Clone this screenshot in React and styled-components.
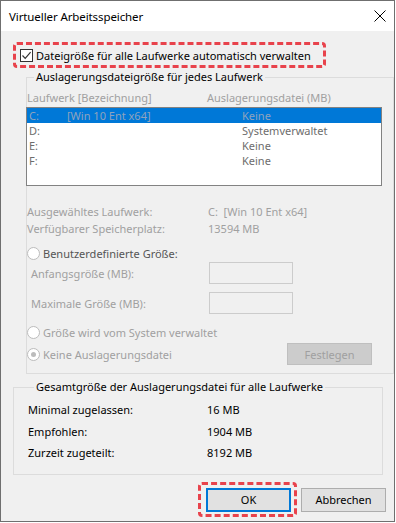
import React from 'react';
import styled, { createGlobalStyle } from 'styled-components';

const GlobalStyle = createGlobalStyle`
  html, body {
    margin: 0;
    padding: 0;
    background: #ffffff;
  }
  * {
    box-sizing: border-box;
  }
`;

const FONT = `"Noto Sans", "Open Sans", Arial, sans-serif`;

const Window = styled.div`
  width: 395px;
  height: 522px;
  border: 1px solid #6f6f6f;
  display: flex;
  flex-direction: column;
  font-family: ${FONT};
  font-size: 11px;
  color: #000;
  background: #f0f0f0;
`;

const TitleBar = styled.div`
  height: 30px;
  background: #fff;
  display: flex;
  align-items: center;
  justify-content: space-between;
  padding: 0 7px 0 8px;
  font-size: 11.5px;
  letter-spacing: -0.1px;
`;

const CloseIcon = styled.svg`
  width: 12px;
  height: 12px;
  margin-right: 1px;
`;

const Body = styled.div`
  flex: 1;
  display: flex;
  flex-direction: column;
  padding: 11px 0 0 12px;
`;

const Highlight = styled.div`
  border: 3px dashed #e8434c;
  border-radius: 4px;
  display: flex;
  align-items: center;
  gap: 3px;
`;

const AutoRow = styled(Highlight)`
  width: 313px;
  height: 26px;
  padding-left: 4px;
`;

const Checkbox = styled.span`
  width: 13px;
  height: 13px;
  border: 1px solid #333;
  background: #fff;
  display: flex;
  align-items: center;
  justify-content: center;
`;

const Group = styled.fieldset`
  margin: ${p => p.$margin};
  padding: ${p => p.$padding};
  border: 1px solid #dcdcdc;
  min-width: 0;
`;

const Legend = styled.legend`
  padding: 0 2px;
  margin-left: ${p => p.$indent}px;
  line-height: 14px;
  color: #000;
`;

const Columns = styled.div`
  display: grid;
  grid-template-columns: ${p => p.$first}px 1fr;
  grid-auto-rows: ${p => p.$line}px;
  align-items: center;
  color: ${p => p.$color || '#000'};
  margin: ${p => p.$margin || '0'};
`;

const ListBox = styled.div`
  margin: 2px 11px 0 -1px;
  height: 79px;
  border: 1px solid #828282;
  background: #fff;
`;

const ListRow = styled.div`
  display: grid;
  grid-template-columns: 38px 175px 1fr;
  height: 15px;
  line-height: 15px;
  padding-left: 2px;
  background: ${p => (p.$selected ? '#0078d7' : 'transparent')};
  color: ${p => (p.$selected ? '#8fa3bd' : '#6d6d6d')};
`;

const RadioRow = styled.div`
  display: flex;
  align-items: center;
  gap: 3px;
  height: ${p => p.$height || 17}px;
  margin-top: ${p => p.$top || 0}px;
  color: ${p => (p.$strong ? '#555' : '#a0a0a0')};
`;

const Radio = styled.span`
  width: 13px;
  height: 13px;
  border-radius: 50%;
  border: 1px solid #bcbcbc;
  background: #fff;
  display: flex;
  align-items: center;
  justify-content: center;

  &::after {
    content: '';
    width: 5px;
    height: 5px;
    border-radius: 50%;
    background: ${p => (p.$checked ? '#bcbcbc' : 'transparent')};
  }
`;

const SizeRow = styled.div`
  display: grid;
  grid-template-columns: 178px 84px;
  align-items: center;
  padding-left: 4px;
  margin-top: ${p => p.$top}px;
  color: #a0a0a0;
`;

const SizeInput = styled.div`
  height: 22px;
  border: 1px solid #cccccc;
  background: #f0f0f0;
`;

const Spacer = styled.div`
  flex: 1;
`;

const Button = styled.button`
  width: 85px;
  height: ${p => p.$height || 24}px;
  font-family: ${FONT};
  font-size: 11px;
  padding: 0;
  border: ${p => (p.$default ? '2px solid #0078d7' : '1px solid #adadad')};
  background: ${p => (p.$disabled ? '#cccccc' : '#e1e1e1')};
  color: ${p => (p.$disabled ? '#a0a0a0' : '#000')};
  border-color: ${p => (p.$disabled ? '#bfbfbf' : undefined)};
`;

const SetButton = styled(Button)`
  margin-right: 21px;
`;

const ButtonBar = styled.div`
  display: flex;
  align-items: center;
  justify-content: flex-end;
  gap: 11px;
  margin: 13px 8px 0 0;
`;

const OkHighlight = styled(Highlight)`
  padding: 3px 3px 2px 5px;
  margin: -6px -7px -5px 0;
`;

const drives = [
  { letter: 'C:', label: '[Win 10 Ent x64]', size: 'Keine', selected: true },
  { letter: 'D:', label: '', size: 'Systemverwaltet' },
  { letter: 'E:', label: '', size: 'Keine' },
  { letter: 'F:', label: '', size: 'Keine' },
];

const totals = [
  ['Minimal zugelassen:', '16 MB'],
  ['Empfohlen:', '1904 MB'],
  ['Zurzeit zugeteilt:', '8192 MB'],
];

export default function App() {
  return (
    <>
      <GlobalStyle />
      <Window>
        <TitleBar>
          <span>Virtueller Arbeitsspeicher</span>
          <CloseIcon viewBox="0 0 12 12">
            <path d="M0.5 0.5 L11.5 11.5 M11.5 0.5 L0.5 11.5" stroke="#000" strokeWidth="1" fill="none" />
          </CloseIcon>
        </TitleBar>
        <Body>
          <AutoRow>
            <Checkbox>
              <svg width="11" height="11" viewBox="0 0 11 11">
                <path d="M1.5 5.5 L4.2 8.3 L9.6 2.2" stroke="#333" strokeWidth="1.2" fill="none" />
              </svg>
            </Checkbox>
            <span>Dateigröße für alle Laufwerke automatisch verwalten</span>
          </AutoRow>

          <Group $margin="2px 0 0 13px" $padding="5px 0 8px 0">
            <Legend $indent={7}>Auslagerungsdateigröße für jedes Laufwerk</Legend>
            <Columns $first={180} $line={16} $color="#a0a0a0">
              <span>Laufwerk [Bezeichnung]</span>
              <span>Auslagerungsdatei (MB)</span>
            </Columns>
            <ListBox>
              {drives.map(d => (
                <ListRow key={d.letter} $selected={d.selected}>
                  <span>{d.letter}</span>
                  <span>{d.label}</span>
                  <span>{d.size}</span>
                </ListRow>
              ))}
            </ListBox>
            <Columns $first={181} $line={17} $color="#a0a0a0" $margin="17px 0 0 0">
              <span>Ausgewähltes Laufwerk:</span>
              <span>C:&nbsp; [Win 10 Ent x64]</span>
              <span>Verfügbarer Speicherplatz:</span>
              <span>13594 MB</span>
            </Columns>
            <RadioRow $top={8} $strong>
              <Radio />
              <span>Benutzerdefinierte Größe:</span>
            </RadioRow>
            <SizeRow $top={0}>
              <span>Anfangsgröße (MB):</span>
              <SizeInput />
            </SizeRow>
            <SizeRow $top={8}>
              <span>Maximale Größe (MB):</span>
              <SizeInput />
            </SizeRow>
            <RadioRow $top={10}>
              <Radio />
              <span>Größe wird vom System verwaltet</span>
            </RadioRow>
            <RadioRow $top={2} $height={22}>
              <Radio $checked />
              <span>Keine Auslagerungsdatei</span>
              <Spacer />
              <SetButton $disabled $height={22}>Festlegen</SetButton>
            </RadioRow>
          </Group>

          <Group $margin="6px 11px 0 0" $padding="5px 0 10px 14px">
            <Legend $indent={6}>Gesamtgröße der Auslagerungsdatei für alle Laufwerke</Legend>
            <Columns $first={179} $line={21.5}>
              {totals.map(([k, v]) => (
                <React.Fragment key={k}>
                  <span>{k}</span>
                  <span>{v}</span>
                </React.Fragment>
              ))}
            </Columns>
          </Group>

          <ButtonBar>
            <OkHighlight>
              <Button $default>OK</Button>
            </OkHighlight>
            <Button>Abbrechen</Button>
          </ButtonBar>
        </Body>
      </Window>
    </>
  );
}
